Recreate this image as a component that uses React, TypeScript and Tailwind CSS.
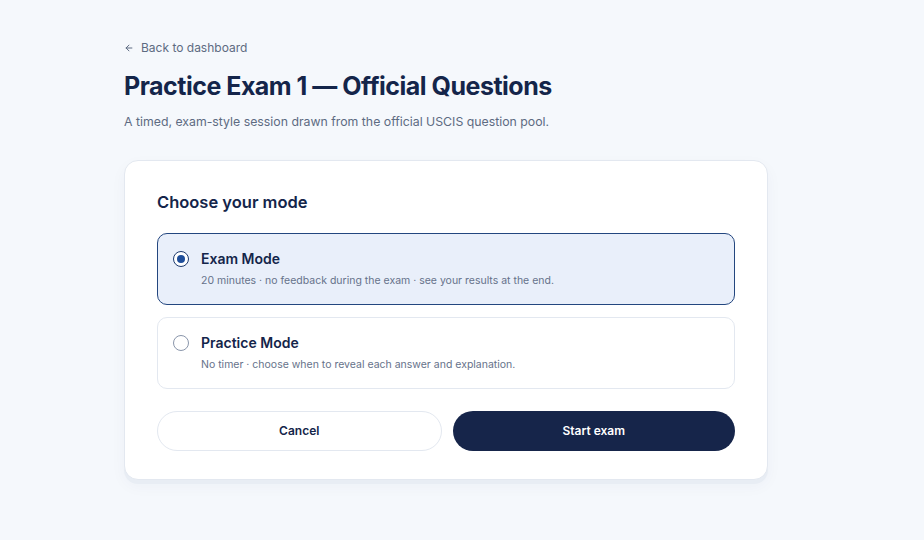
import React, { useState } from "react";

function Radio({ checked }: { checked: boolean }) {
  return checked ? (
    <span className="flex h-4 w-4 shrink-0 items-center justify-center rounded-full border-[1.5px] border-[#1d3a6e] bg-white">
      <span className="h-2 w-2 rounded-full bg-[#1f4e9a]" />
    </span>
  ) : (
    <span className="h-4 w-4 shrink-0 rounded-full border border-[#8a96ab] bg-white" />
  );
}

export default function App() {
  const [mode, setMode] = useState<"exam" | "practice">("exam");
  const options = [
    {
      id: "exam" as const,
      title: "Exam Mode",
      desc: "20 minutes · no feedback during the exam · see your results at the end.",
    },
    {
      id: "practice" as const,
      title: "Practice Mode",
      desc: "No timer · choose when to reveal each answer and explanation.",
    },
  ];
  return (
    <div
      className="min-h-[540px] w-full bg-[#f5f8fc] px-[124px] pt-[39px]"
      style={{ fontFamily: "Inter, 'Noto Sans', sans-serif" }}
    >
      <a className="flex items-center gap-[7px] text-[12px] leading-[18px] text-[#5d6b82]" href="#">
        <svg width="10" height="10" viewBox="0 0 24 24" fill="none" stroke="currentColor" strokeWidth="2.4" strokeLinecap="round" strokeLinejoin="round">
          <path d="M19 12H5" />
          <path d="M12 19l-7-7 7-7" />
        </svg>
        Back to dashboard
      </a>
      <h1 className="mt-[13px] text-[25px] font-bold leading-[32px] tracking-[-0.02em] text-[#14254a]">
        Practice Exam 1 — Official Questions
      </h1>
      <p className="mt-[11px] text-[12.3px] leading-[18px] text-[#5d6b82]">
        A timed, exam-style session drawn from the official USCIS question pool.
      </p>

      <div className="mt-[29px] w-[644px] rounded-[14px] border border-[#e3e8f0] bg-white px-[32px] pb-[28px] pt-[29px] shadow-[0_4px_0_#e8edf4,0_6px_16px_rgba(30,50,90,0.04)]">
        <h2 className="text-[16.5px] font-semibold leading-[24px] text-[#14254a]">Choose your mode</h2>
        <div className="mt-[19px] flex flex-col gap-[12px]">
          {options.map((o) => {
            const sel = mode === o.id;
            return (
              <button
                key={o.id}
                onClick={() => setMode(o.id)}
                className={
                  "flex flex-col rounded-[10px] border px-[15px] pb-[15px] pt-[15px] text-left " +
                  (sel ? "border-[#23467f] bg-[#e9effa]" : "border-[#e3e8f0] bg-white")
                }
              >
                <div className="flex items-center gap-[12px]">
                  <Radio checked={sel} />
                  <span className="text-[14px] font-semibold leading-[20px] text-[#14254a]">{o.title}</span>
                </div>
                <span className="mt-[4px] pl-[28px] text-[10.5px] leading-[16px] text-[#66728a]">{o.desc}</span>
              </button>
            );
          })}
        </div>
        <div className="mt-[22px] flex gap-[11px]">
          <button className="h-[40px] flex-1 rounded-full border border-[#e3e8f0] bg-white text-[12px] font-semibold text-[#14254a]">
            Cancel
          </button>
          <button className="h-[40px] flex-1 rounded-full bg-[#16254a] text-[12px] font-semibold text-white">
            Start exam
          </button>
        </div>
      </div>
    </div>
  );
}
